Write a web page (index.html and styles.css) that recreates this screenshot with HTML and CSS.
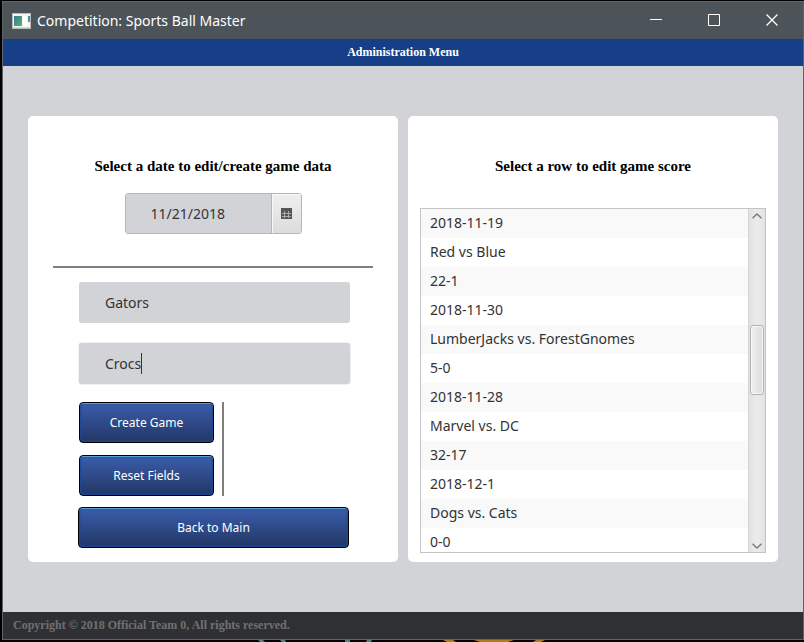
FILE: index.html
```html
<!DOCTYPE html>
<html lang="en">
<head>
<meta charset="utf-8">
<title>Competition: Sports Ball Master</title>
<link rel="stylesheet" href="styles.css">
</head>
<body>
<div class="window">
  <header class="titlebar">
    <svg class="app-icon" width="19" height="16" viewBox="0 0 19 16" aria-hidden="true">
      <defs><linearGradient id="pane" x1="0" y1="0" x2="1" y2="1"><stop offset="0" stop-color="#35789a"/><stop offset="1" stop-color="#59b668"/></linearGradient></defs>
      <path d="M0 0h19v16H0z" fill="#b9bcbd"/>
      <path d="M1 1h17v14H1z" fill="#f4f4f4"/>
      <path d="M2 3h8v10H2z" fill="url(#pane)"/>
      <path d="M11 3h4v10h-4z" fill="#fff"/>
      <path d="M16 3h2v6h-2z" fill="url(#pane)"/>
      <path d="M1 14h17v1H1z" fill="#d5d7d8"/>
    </svg>
    <span class="window-title">Competition: Sports Ball Master</span>
    <div class="window-controls">
      <button type="button" aria-label="Minimize"><svg width="13" height="13" viewBox="0 0 13 13"><path d="M0 5.5h12"/></svg></button>
      <button type="button" aria-label="Maximize"><svg width="13" height="13" viewBox="0 0 13 13"><path d="M.5.5h11v11H.5z"/></svg></button>
      <button type="button" aria-label="Close"><svg width="13" height="13" viewBox="0 0 13 13"><path d="M.5.5l11 11M11.5.5l-11 11" stroke-width="1.3"/></svg></button>
    </div>
  </header>
  <h1 class="menu-title">Administration Menu</h1>
  <main class="panels">
    <section class="card editor">
      <h2><label for="date">Select a date to edit/create game data</label></h2>
      <div class="date-picker">
        <input id="date" type="text" value="11/21/2018">
        <button type="button" aria-label="Open calendar">
          <svg width="11" height="11" viewBox="0 0 11 11"><path d="M0 0h11v11H0z" fill="#555"/><path d="M1 5.5h9M1 8.500h9M3.500 3v7M7.500 3v7" stroke="#aaa" fill="none"/></svg>
        </button>
      </div>
      <hr>
      <form class="game-form">
        <input class="field" type="text" aria-label="Home team" value="Gators">
        <div class="active-field">
          <input class="field" type="text" aria-label="Away team" value="Crocs">
          <span class="caret"></span>
        </div>
        <div class="actions">
          <button class="action" type="button">Create Game</button>
          <button class="action" type="button">Reset Fields</button>
        </div>
      </form>
      <button class="action back" type="button">Back to Main</button>
    </section>
    <section class="card scores">
      <h2>Select a row to edit game score</h2>
      <div class="list-view">
        <ul>
          <li>2018-11-19</li>
          <li>Red vs Blue</li>
          <li>22-1</li>
          <li>2018-11-30</li>
          <li>LumberJacks vs. ForestGnomes</li>
          <li>5-0</li>
          <li>2018-11-28</li>
          <li>Marvel vs. DC</li>
          <li>32-17</li>
          <li>2018-12-1</li>
          <li>Dogs vs. Cats</li>
          <li>0-0</li>
        </ul>
        <div class="scrollbar">
          <button type="button" aria-label="Scroll up"><svg width="10" height="6" viewBox="0 0 10 6"><path d="M.5 5.2L5 1l4.500 4.200"/></svg></button>
          <div class="track"><div class="thumb"></div></div>
          <button type="button" aria-label="Scroll down"><svg width="10" height="6" viewBox="0 0 10 6"><path d="M.5.8L5 5 9.500.8"/></svg></button>
        </div>
      </div>
    </section>
  </main>
  <footer>Copyright © 2018 Official Team 0, All rights reserved.</footer>
</div>
<svg class="desktop" height="2" aria-hidden="true">
  <path d="M258 0h5l2 2h-5zM280 0h5l1 2h-4zM345 0h5v2h-5zM367 0h5l-1 2h-5z" fill="#4a8587"/>
  <path d="M443 0h10l3 2h-9zM474 0h40l-6 2h-28zM536 0h9l-4 2h-8z" fill="#b07c22"/>
</svg>
</body>
</html>
```
FILE: styles.css
```css
* { box-sizing: border-box; }

body {
  margin: 0;
  min-height: 100vh;
  display: flex;
  flex-direction: column;
  background: #000;
  color: #333;
  font: 14px/20px "Noto Sans", sans-serif;
}

button, input { font: inherit; color: inherit; margin: 0; }
button { padding: 0; border: 0; background: none; }
h1, h2 { margin: 0; font-family: "Liberation Serif", serif; font-weight: bold; text-align: center; }
svg { display: block; }

.window {
  flex: 1;
  display: flex;
  flex-direction: column;
  margin: 1px 0 0 2px;
  border: 1px solid #5f6467;
  background: #d2d3d7;
}

.titlebar {
  height: 37px;
  display: flex;
  align-items: center;
  padding: 0 2px 0 9px;
  background: #4c5459;
  color: #fff;
}
.window-title { flex: 1; margin-left: 6px; }
.window-controls { display: flex; }
.window-controls button { width: 58px; height: 37px; display: grid; place-items: center; }
.window-controls svg { fill: none; stroke: #fff; }

.menu-title {
  background: #163f88;
  color: #fff;
  font-size: 12px;
  line-height: 27px;
}

.panels {
  flex: 1;
  display: grid;
  grid-template-columns: 1fr 1fr;
  gap: 10px;
  padding: 50px 25px;
}
.card { background: #fff; border-radius: 5px; }
.card h2 { color: #000; font-size: 15px; line-height: 20px; }

.editor { padding: 40px 25px 14px; display: flex; flex-direction: column; }

.date-picker {
  width: 177px;
  height: 41px;
  margin: 17px auto 0;
  display: flex;
  border: 1px solid #b5b6b7;
  border-radius: 3px;
  overflow: hidden;
}
.date-picker input {
  flex: 1;
  min-width: 0;
  padding: 0 25px;
  border: 0;
  background: #d2d3d7;
}
.date-picker button {
  width: 30px;
  display: grid;
  place-items: center;
  border-left: 1px solid #b5b6b7;
  background: linear-gradient(#efefef, #dcdcdc);
  box-shadow: inset 1px 1px #f8f8f8;
}

hr { width: 100%; height: 2px; margin: 32px 0 14px; border: 0; background: #808080; }

.game-form { display: flex; flex-direction: column; padding: 0 23px 0 26px; }
.field {
  width: 100%;
  height: 41px;
  display: block;
  padding: 0 26px;
  border: 0;
  border-radius: 3px;
  background: #d2d3d7;
}
.active-field { position: relative; margin: 20px 0 18px; }
.active-field .field { box-shadow: 0 0 0 1px #f0f1f3; }
.caret { position: absolute; left: 62px; top: 10px; width: 1px; height: 21px; background: #333; }

.actions {
  align-self: flex-start;
  display: grid;
  gap: 12px;
  padding-right: 8px;
  border-right: 2px solid #808080;
}
.actions .action { width: 135px; }
.action {
  height: 41px;
  border: 1px solid #000;
  border-radius: 4px;
  background: linear-gradient(#3b5dac, #223765);
  box-shadow: inset 0 1px #5c9fd8, inset 0 0 2px 1px #1c4a9c;
  color: #fff;
  font-size: 12px;
}
.back { margin: 11px 24px 0 25px; }

.scores { padding: 40px 12px 9px; display: flex; flex-direction: column; }
.list-view {
  height: 345px;
  margin-top: 32px;
  display: flex;
  border: 1px solid #c3c4c5;
  overflow: hidden;
}
.list-view ul { flex: 1; margin: 0; padding: 0; list-style: none; }
.list-view li { height: 29px; padding: 0 9px; line-height: 28px; }
.list-view li:nth-child(odd) { background: #f9f9f9; }

.scrollbar {
  width: 17px;
  display: flex;
  flex-direction: column;
  border-left: 1px solid #d4d4d4;
  background: linear-gradient(90deg, #e2e2e2, #ececec 50%, #e2e2e2);
}
.scrollbar button { height: 13px; display: grid; place-items: center; }
.scrollbar svg { fill: none; stroke: #777; stroke-width: 1.3; }
.track { flex: 1; padding: 103px 1px 0; }
.thumb {
  height: 70px;
  border: 1px solid #b0b0b0;
  border-radius: 3px;
  background: linear-gradient(90deg, #f0f0f0, #dcdcdc);
  box-shadow: inset 0 0 0 1px #f8f8f8;
}

footer {
  padding-left: 10px;
  background: #2f3034;
  color: #707070;
  font: bold 12px/27px "Liberation Serif", serif;
}

.desktop { width: 100%; }
```
